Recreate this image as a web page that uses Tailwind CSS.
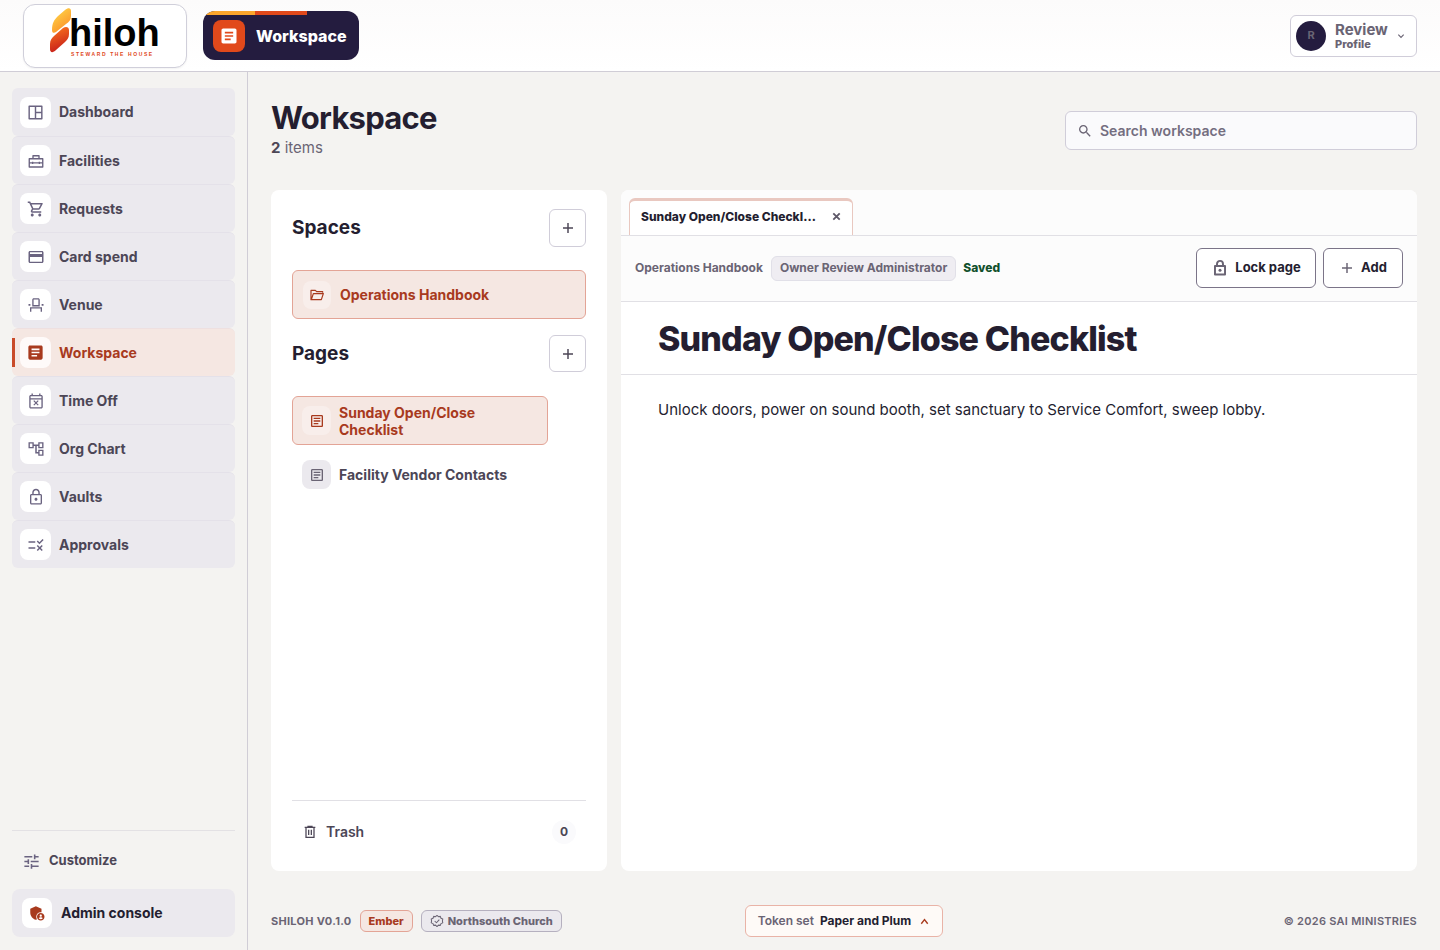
<!DOCTYPE html>
<html lang="en">
  <head>
    <meta charset="UTF-8" />
    <meta name="viewport" content="width=device-width, initial-scale=1.0" />
    <title>Workspace - Shiloh</title>
    <script src="https://cdn.jsdelivr.net/npm/@tailwindcss/browser@4"></script>
  </head>
  <body class="min-h-screen flex flex-col bg-[#f4f3f1] font-['Inter',sans-serif] text-[#241e30]">

    <!-- icon set -->
    <svg class="hidden">
      <symbol id="i-dashboard" viewBox="0 0 24 24"><path d="M4 4h16v16H4zM12 4v16M12 12h8" fill="none" stroke="currentColor" stroke-width="1.8" stroke-linejoin="round" /></symbol>
      <symbol id="i-toolbox" viewBox="0 0 24 24"><path d="M3 9h18v11H3zM8 9V5h8v4M3 14.500h18M7.500 13v3M16.500 13v3" fill="none" stroke="currentColor" stroke-width="1.800" stroke-linejoin="round" /></symbol>
      <symbol id="i-cart" viewBox="0 0 24 24"><path fill="currentColor" d="M15.55 13c.75 0 1.41-.41 1.75-1.03l3.58-6.49c.37-.66-.11-1.480-.87-1.480H5.210l-.94-2H1v2h2l3.600 7.590-1.350 2.440C4.520 15.370 5.480 17 7 17h12v-2H7l1.100-2h7.450zM6.160 6h12.150l-2.760 5H8.530L6.160 6zM7 18c-1.100 0-1.990.9-1.990 2S5.900 22 7 22s2-.9 2-2-.9-2-2-2zm10 0c-1.100 0-1.990.9-1.990 2s.89 2 1.990 2 2-.9 2-2-.9-2-2-2z" /></symbol>
      <symbol id="i-card" viewBox="0 0 24 24"><path fill="currentColor" d="M20 4H4c-1.110 0-1.990.89-1.990 2L2 18c0 1.110.89 2 2 2h16c1.110 0 2-.89 2-2V6c0-1.110-.89-2-2-2zm0 14.300H4V12h16v6.300zM20 8H4V5.700h16V8z" /></symbol>
      <symbol id="i-seat" viewBox="0 0 24 24"><path fill="currentColor" d="M15.200 4.800V12H8.800V4.800h6.400M15 3H9c-1.100 0-2 .9-2 2v9h10V5c0-1.100-.9-2-2-2zm7 7.500h-2.500V13H22v-2.500zM4.500 10.500H2V13h2.500v-2.500zM20 15H4v6h1.800v-4.200h12.400V21H20v-6z" /></symbol>
      <symbol id="i-article" viewBox="0 0 24 24"><path fill="currentColor" d="M19 5v14H5V5h14m0-2H5c-1.100 0-2 .9-2 2v14c0 1.100.9 2 2 2h14c1.100 0 2-.9 2-2V5c0-1.100-.9-2-2-2zM14 17H7v-2h7v2zm3-4H7v-2h10v2zm0-4H7V7h10v2z" /></symbol>
      <symbol id="i-article-fill" viewBox="0 0 24 24"><path fill="currentColor" d="M19 3H5c-1.100 0-2 .9-2 2v14c0 1.100.9 2 2 2h14c1.100 0 2-.9 2-2V5c0-1.100-.9-2-2-2zm-5 14H7v-2h7v2zm3-4H7v-2h10v2zm0-4H7V7h10v2z" /></symbol>
      <symbol id="i-busy" viewBox="0 0 24 24"><path fill="currentColor" d="M9.560 18l2.440-2.440L14.440 18l1.060-1.060-2.440-2.440 2.440-2.440L14.440 11 12 13.440 9.560 11 8.500 12.060l2.440 2.440-2.440 2.440L9.560 18zM19 4h-1V2h-1.800v2H7.800V2H6v2H5c-1.110 0-2 .9-2 2v14c0 1.100.89 2 2 2h14c1.100 0 2-.9 2-2V6c0-1.100-.9-2-2-2zm.2 16.200H4.800V10h14.400v10.200zm0-12H4.800V5.800h14.400v2.400z" /></symbol>
      <symbol id="i-tree" viewBox="0 0 24 24"><path fill="currentColor" d="M22 11V3h-7v3H9V3H2v8h7V8h2v10h4v3h7v-8h-7v3h-2V8h2v3h7zM7.200 9.200H3.800V4.800h3.400v4.400zm9.600 5.600h3.400v4.400h-3.400v-4.400zm0-10h3.400v4.400h-3.400V4.800z" /></symbol>
      <symbol id="i-lock" viewBox="0 0 24 24"><path fill="currentColor" d="M12 17c1.100 0 2-.9 2-2s-.9-2-2-2-2 .9-2 2 .9 2 2 2zm6-9h-1V6c0-2.760-2.240-5-5-5S7 3.240 7 6v2H6c-1.100 0-2 .9-2 2v10c0 1.100.9 2 2 2h12c1.100 0 2-.9 2-2V10c0-1.100-.9-2-2-2zM8.900 6c0-1.710 1.390-3.100 3.100-3.100s3.100 1.390 3.100 3.100v2H8.900V6zM18.200 20.200H5.800V9.800h12.400v10.400z" /></symbol>
      <symbol id="i-lock-bold" viewBox="0 0 24 24"><path d="M5.300 9.300h13.400v11.400H5.300zM8 9V6.500a4 4 0 0 1 8 0V9" fill="none" stroke="currentColor" stroke-width="2.600" stroke-linejoin="round" /><circle cx="12" cy="15" r="2" fill="currentColor" /></symbol>
      <symbol id="i-rule" viewBox="0 0 24 24"><path fill="currentColor" d="M16.540 11L13 7.460l1.410-1.410 2.120 2.120 4.240-4.240 1.410 1.410L16.540 11zM11 7H2v2h9V7zm10 6.410L19.590 12 17 14.590 14.410 12 13 13.410 15.590 16 13 18.590 14.410 20 17 17.410 19.590 20 21 18.590 18.410 16 21 13.410zM11 15H2v2h9v-2z" /></symbol>
      <symbol id="i-tune" viewBox="0 0 24 24"><path fill="currentColor" d="M3 17v2h6v-2H3zM3 5v2h10V5H3zm10 16v-2h8v-2h-8v-2h-2v6h2zM7 9v2H3v2h4v2h2V9H7zm14 4v-2H11v2h10zm-6-4h2V7h4V5h-4V3h-2v6z" /></symbol>
      <symbol id="i-admin" viewBox="0 0 24 24"><path fill="currentColor" d="M17 11c.34 0 .67.04 1 .09V6.270L10.500 3 3 6.270v4.910c0 4.540 3.200 8.790 7.500 9.820.55-.13 1.080-.32 1.600-.55-.69-.98-1.100-2.170-1.100-3.450 0-3.310 2.690-6 6-6zM17 12c-2.760 0-5 2.240-5 5s2.240 5 5 5 5-2.240 5-5-2.240-5-5-5zm0 2c.83 0 1.500.67 1.500 1.500S17.830 17 17 17s-1.500-.67-1.500-1.500S16.170 14 17 14zm0 6.200c-1.100 0-2-.5-2.600-1.300.1-.8 1.800-1.200 2.600-1.200s2.500.4 2.600 1.200c-.6.8-1.500 1.300-2.600 1.300z" /></symbol>
      <symbol id="i-folder" viewBox="0 0 24 24"><path d="M20.500 8.500V7H11.500L9.500 5H3v14h15.500l3-9H6.500L3.500 19" fill="none" stroke="currentColor" stroke-width="1.800" stroke-linejoin="round" /></symbol>
      <symbol id="i-search" viewBox="0 0 24 24"><path fill="currentColor" d="M15.500 14h-.79l-.28-.27C15.410 12.590 16 11.110 16 9.500 16 5.910 13.090 3 9.500 3S3 5.910 3 9.500 5.910 16 9.500 16c1.610 0 3.090-.59 4.230-1.570l.27.28v.79l5 4.990L20.490 19l-4.990-5zm-6 0C7.010 14 5 11.990 5 9.500S7.010 5 9.500 5 14 7.010 14 9.500 11.990 14 9.500 14z" /></symbol>
      <symbol id="i-trash" viewBox="0 0 24 24"><path d="M6 5v15h12V5M4 5h16M9 5V3.500h6V5M10 8.500v8M14 8.500v8" fill="none" stroke="currentColor" stroke-width="1.900" /></symbol>
      <symbol id="i-plus" viewBox="0 0 24 24"><path d="M12 4.500v15M4.500 12h15" fill="none" stroke="currentColor" stroke-width="2.200" /></symbol>
      <symbol id="i-close" viewBox="0 0 24 24"><path d="M5 5l14 14M19 5L5 19" fill="none" stroke="currentColor" stroke-width="4" /></symbol>
      <symbol id="i-down" viewBox="0 0 24 24"><path d="M4 8l8 8 8-8" fill="none" stroke="currentColor" stroke-width="3.500" /></symbol>
      <symbol id="i-up" viewBox="0 0 24 24"><path d="M5 17l7-9 7 9" fill="none" stroke="currentColor" stroke-width="3" /></symbol>
      <symbol id="i-verified" viewBox="0 0 24 24"><path d="M12 2.500l2.500 2.100 3.200-.5 1.100 3.100 3.100 1.200-.6 3.600.6 3.200-3.100 1.300-1.100 3-3.200-.4L12 21.500l-2.500-2.400-3.200.4-1.100-3-3.100-1.300.6-3.200-.6-3.600 3.100-1.200 1.100-3.100 3.200.5zM8 12l3 3 5-5.500" fill="none" stroke="currentColor" stroke-width="1.800" stroke-linejoin="round" /></symbol>
    </svg>

    <header class="h-[72px] shrink-0 flex items-center border-b border-[#d0cdd6] bg-linear-to-b from-[#fcfbfb] to-white px-[23px]">
      <a href="#" aria-label="Shiloh" class="flex h-16 w-[164px] items-center justify-center rounded-xl border border-[#d0cfda] bg-white shadow-xs">
        <svg viewBox="0 0 164 64" class="h-16 w-[164px] shrink-0">
          <defs>
            <linearGradient id="flameTop" x1="0.200" y1="0" x2="0.800" y2="1"><stop offset="0" stop-color="#ffd84a" /><stop offset="1" stop-color="#fb8a24" /></linearGradient>
            <linearGradient id="flameBottom" x1="0.300" y1="0" x2="0.600" y2="1"><stop offset="0" stop-color="#f9721d" /><stop offset="1" stop-color="#c41a1a" /></linearGradient>
          </defs>
          <path fill="url(#flameTop)" d="M29 26C29 19 31 16 35 12L42 6C45 3.500 48 3.500 48 7V12C48 16 46 18 43 20L33 28C31 29.500 29 29 29 26Z" />
          <path fill="url(#flameBottom)" d="M27 45V40C27 36 29 34 31 32L40 24C43 22 46 23 46 26V30C46 34 44 36 42 38L33 46C30 49 27 49 27 45Z" />
          <text x="46" y="42" font-size="38" font-weight="700" font-family="Liberation Sans, sans-serif" fill="#000">hiloh</text>
          <text x="48" y="52" font-size="5" font-weight="700" letter-spacing="1.600" font-family="Liberation Sans, sans-serif" fill="#e0481c">STEWARD THE HOUSE</text>
        </svg>
      </a>
      <div class="relative ml-4 flex h-[49px] items-center gap-[11px] overflow-hidden rounded-xl bg-[#241c3f] pr-3 pl-[10px] text-white">
        <div class="absolute inset-x-0 top-0 flex h-1">
          <span class="w-1/3 bg-[#fba62c]"></span>
          <span class="w-1/3 bg-[#e1491b]"></span>
        </div>
        <span class="flex size-8 items-center justify-center rounded-lg bg-[#e1491b]"><svg class="size-5"><use href="#i-article-fill" /></svg></span>
        <span class="text-base font-extrabold">Workspace</span>
      </div>
      <button type="button" class="ml-auto flex h-[42px] w-[127px] items-center rounded-md border border-[#d0cdd9] bg-white pl-[5px] text-left font-bold text-[#6a6474]">
        <span class="flex size-[30px] items-center justify-center rounded-full bg-[#241c3f] text-[11px]">R</span>
        <span class="ml-[9px] flex flex-col">
          <span class="text-[15px] leading-4">Review</span>
          <span class="text-[11px] leading-3 font-extrabold">Profile</span>
        </span>
        <svg class="ml-auto mr-[11px] size-2"><use href="#i-down" /></svg>
      </button>
    </header>

    <div class="flex grow">
      <aside class="flex w-[248px] shrink-0 flex-col border-r border-[#d0cdd6] px-3 pt-4 pb-[13px]">
        <nav class="flex flex-col text-sm font-bold text-[#4c4656]">
          <a href="#" class="flex h-12 items-center gap-2 rounded-md bg-[#ebe9ee] px-2"><span class="flex size-[31px] items-center justify-center rounded-lg bg-white text-[#6a6380]"><svg class="size-[19px]"><use href="#i-dashboard" /></svg></span>Dashboard</a>
          <a href="#" class="flex h-12 items-center gap-2 rounded-md border-t border-[#e4e1e9] bg-[#ebe9ee] px-2"><span class="flex size-[31px] items-center justify-center rounded-lg bg-white text-[#6a6380]"><svg class="size-[18px]"><use href="#i-toolbox" /></svg></span>Facilities</a>
          <a href="#" class="flex h-12 items-center gap-2 rounded-md border-t border-[#e4e1e9] bg-[#ebe9ee] px-2"><span class="flex size-[31px] items-center justify-center rounded-lg bg-white text-[#6a6380]"><svg class="size-[18px]"><use href="#i-cart" /></svg></span>Requests</a>
          <a href="#" class="flex h-12 items-center gap-2 rounded-md border-t border-[#e4e1e9] bg-[#ebe9ee] px-2"><span class="flex size-[31px] items-center justify-center rounded-lg bg-white text-[#6a6380]"><svg class="size-[18px]"><use href="#i-card" /></svg></span>Card spend</a>
          <a href="#" class="flex h-12 items-center gap-2 rounded-md border-t border-[#e4e1e9] bg-[#ebe9ee] px-2"><span class="flex size-[31px] items-center justify-center rounded-lg bg-white text-[#6a6380]"><svg class="size-[18px]"><use href="#i-seat" /></svg></span>Venue</a>
          <a href="#" aria-current="page" class="relative flex h-12 items-center gap-2 rounded-md border-t border-[#eee0e0] bg-[#f5e7e2] px-2 text-[#a83a1e]"><span class="absolute left-0 top-[9px] h-[29px] w-[3px] bg-[#c94a28]"></span><span class="flex size-[31px] items-center justify-center rounded-lg bg-[#fefaf9]"><svg class="size-[19px]"><use href="#i-article-fill" /></svg></span>Workspace</a>
          <a href="#" class="flex h-12 items-center gap-2 rounded-md border-t border-[#e4e1e9] bg-[#ebe9ee] px-2"><span class="flex size-[31px] items-center justify-center rounded-lg bg-white text-[#6a6380]"><svg class="size-[18px]"><use href="#i-busy" /></svg></span>Time Off</a>
          <a href="#" class="flex h-12 items-center gap-2 rounded-md border-t border-[#e4e1e9] bg-[#ebe9ee] px-2"><span class="flex size-[31px] items-center justify-center rounded-lg bg-white text-[#6a6380]"><svg class="size-[18px]"><use href="#i-tree" /></svg></span>Org Chart</a>
          <a href="#" class="flex h-12 items-center gap-2 rounded-md border-t border-[#e4e1e9] bg-[#ebe9ee] px-2"><span class="flex size-[31px] items-center justify-center rounded-lg bg-white text-[#6a6380]"><svg class="size-[18px]"><use href="#i-lock" /></svg></span>Vaults</a>
          <a href="#" class="flex h-12 items-center gap-2 rounded-md border-t border-[#e4e1e9] bg-[#ebe9ee] px-2"><span class="flex size-[31px] items-center justify-center rounded-lg bg-white text-[#6a6380]"><svg class="size-[18px]"><use href="#i-rule" /></svg></span>Approvals</a>
        </nav>
        <div class="mt-auto border-t border-[#e3e1e4] pt-3">
          <button type="button" class="flex h-9 w-full items-center gap-2 px-[10px] text-[13px] font-bold text-[#4c4656]"><svg class="size-[19px] text-[#6a6380]"><use href="#i-tune" /></svg>Customize</button>
          <a href="#" class="mt-[10px] flex h-12 items-center gap-[9px] rounded-lg bg-[#ebe9ee] px-[10px] text-sm font-bold"><span class="flex size-[30px] items-center justify-center rounded-lg bg-white text-[#a83a1e]"><svg class="size-[18px]"><use href="#i-admin" /></svg></span>Admin console</a>
        </div>
      </aside>

      <div class="flex min-w-0 grow flex-col px-[23px] pt-[26px] pb-[13px]">
        <div class="flex items-end justify-between">
          <div>
            <h1 class="text-[31px] leading-10 font-bold tracking-tight">Workspace</h1>
            <p class="text-[15px] leading-5 text-[#6a6474]"><strong class="font-bold text-[#4c4656]">2</strong> items</p>
          </div>
          <label class="mb-2 flex h-[39px] w-[352px] items-center gap-[7px] rounded-md border border-[#d0cdd9] bg-[#fafafc] px-[11px] text-[#6a6474]">
            <svg class="size-4"><use href="#i-search" /></svg>
            <input type="search" aria-label="Search workspace" placeholder="Search workspace" class="min-w-0 grow text-sm font-semibold outline-none placeholder:text-[#746e80]" />
          </label>
        </div>

        <div class="mt-8 grid grow grid-cols-[336px_minmax(0,1fr)] gap-[14px]">
          <section class="flex flex-col rounded-lg bg-white px-[21px] pt-[19px] pb-[19px]">
            <div class="flex items-center justify-between">
              <h2 class="text-[19px] leading-6 font-bold">Spaces</h2>
              <button type="button" aria-label="Add space" class="flex h-[38px] w-[37px] items-center justify-center rounded-md border border-[#d0cdd9] text-[#4c4656]"><svg class="size-4"><use href="#i-plus" /></svg></button>
            </div>
            <a href="#" class="mt-[23px] flex h-[49px] items-center gap-[9px] rounded-md border border-[#e3a496] bg-[#f5e7e2] px-[10px] text-sm font-bold text-[#a83a1e]"><span class="flex size-7 items-center justify-center rounded-lg bg-[#f8eeeb]"><svg class="size-4"><use href="#i-folder" /></svg></span>Operations Handbook</a>
            <div class="mt-4 flex items-center justify-between">
              <h2 class="text-[19px] leading-6 font-bold">Pages</h2>
              <button type="button" aria-label="Add page" class="flex size-[37px] items-center justify-center rounded-md border border-[#d0cdd9] text-[#4c4656]"><svg class="size-4"><use href="#i-plus" /></svg></button>
            </div>
            <div class="mt-6 mr-[38px] flex flex-col gap-[5px] text-sm leading-[17px] font-bold">
              <a href="#" class="flex h-[49px] items-center gap-2 rounded-md border border-[#e3a496] bg-[#f5e7e2] px-[9px] text-[#a83a1e]"><span class="flex size-[29px] shrink-0 items-center justify-center rounded-lg bg-[#f8eeeb]"><svg class="size-4"><use href="#i-article" /></svg></span><span class="pr-8">Sunday Open/Close Checklist</span></a>
              <a href="#" class="flex h-[49px] items-center gap-2 rounded-md border border-transparent px-[9px] text-[#4c4656]"><span class="flex size-[29px] shrink-0 items-center justify-center rounded-lg bg-[#ebe9ee] text-[#6a6474]"><svg class="size-4"><use href="#i-article" /></svg></span>Facility Vendor Contacts</a>
            </div>
            <div class="mt-auto border-t border-[#e1e0e5] pt-[11px]">
              <button type="button" class="flex h-10 w-full items-center px-[10px] text-sm font-semibold text-[#4c4656]"><svg class="mr-2 size-4"><use href="#i-trash" /></svg>Trash<span class="ml-auto flex size-6 items-center justify-center rounded-full bg-[#fafafc] text-xs font-bold">0</span></button>
            </div>
          </section>

          <section class="flex flex-col overflow-hidden rounded-lg bg-white">
            <div class="flex h-[46px] items-end border-b border-[#e1e0e5] bg-[#fcfcfc] px-2">
              <div class="flex h-[37px] w-56 items-center rounded-t-md border border-t-3 border-b-0 border-[#e9c8c0] bg-white pr-2 pb-[3px] pl-[11px] text-xs font-extrabold">
                <span title="Sunday Open/Close Checklist">Sunday Open/Close Checkl…</span>
                <button type="button" aria-label="Close tab" class="ml-auto flex size-4 items-center justify-center text-[#5e5868]"><svg class="size-[11px]"><use href="#i-close" /></svg></button>
              </div>
            </div>
            <div class="flex items-center border-b border-[#e1e0e5] bg-[#fcfcfc] px-[14px] pt-3 pb-[13px] text-xs font-bold text-[#6a6474]">
              <span>Operations Handbook</span>
              <span class="ml-2 flex h-[25px] items-center rounded-md border border-[#e1e0e8] bg-[#efedf2] px-2">Owner Review Administrator</span>
              <span class="ml-[7px] font-extrabold text-[#11502c]">Saved</span>
              <button type="button" class="ml-auto flex h-10 w-[120px] items-center justify-center gap-[6px] rounded-md border border-[#7b7488] bg-white text-[13px] text-[#241e30]"><svg class="size-[18px] text-[#6a6474]"><use href="#i-lock-bold" /></svg>Lock page</button>
              <button type="button" class="ml-[7px] flex h-10 w-20 items-center justify-center gap-[6px] rounded-md border border-[#7b7488] bg-white text-[13px] text-[#241e30]"><svg class="size-4 text-[#6a6474]"><use href="#i-plus" /></svg>Add</button>
            </div>
            <h2 class="border-b border-[#e1e0e5] px-[37px] pt-[17px] pb-[15px] text-[34px] leading-10 font-extrabold tracking-tight">Sunday Open/Close Checklist</h2>
            <p class="px-[37px] pt-[23px] text-[15px] leading-6">Unlock doors, power on sound booth, set sanctuary to Service Comfort, sweep lobby.</p>
          </section>
        </div>

        <footer class="mt-[34px] grid h-8 grid-cols-[1fr_auto_1fr] items-center text-[11px] font-bold text-[#6a6474]">
          <div class="flex items-center gap-2">
            <span class="tracking-wide">SHILOH V0.1.0</span>
            <span class="flex h-[22px] items-center rounded-md border border-[#e3a496] bg-[#f5e7e2] px-2 font-extrabold text-[#a83a1e]">Ember</span>
            <span class="flex h-[22px] items-center gap-1 rounded-md border border-[#b5b0bf] bg-[#ebe9ee] px-2 font-extrabold"><svg class="size-[14px]"><use href="#i-verified" /></svg>Northsouth Church</span>
          </div>
          <button type="button" class="flex h-8 items-center rounded-md border border-[#e9b3a7] bg-[#fefaf7] px-3 text-xs font-semibold">Token set<span class="ml-[6px] font-bold text-[#241e30]">Paper and Plum</span><svg class="ml-2 size-[11px] text-[#a83a1e]"><use href="#i-up" /></svg></button>
          <span class="text-right font-semibold tracking-wide">© 2026 SAI MINISTRIES</span>
        </footer>
      </div>
    </div>
  </body>
</html>
